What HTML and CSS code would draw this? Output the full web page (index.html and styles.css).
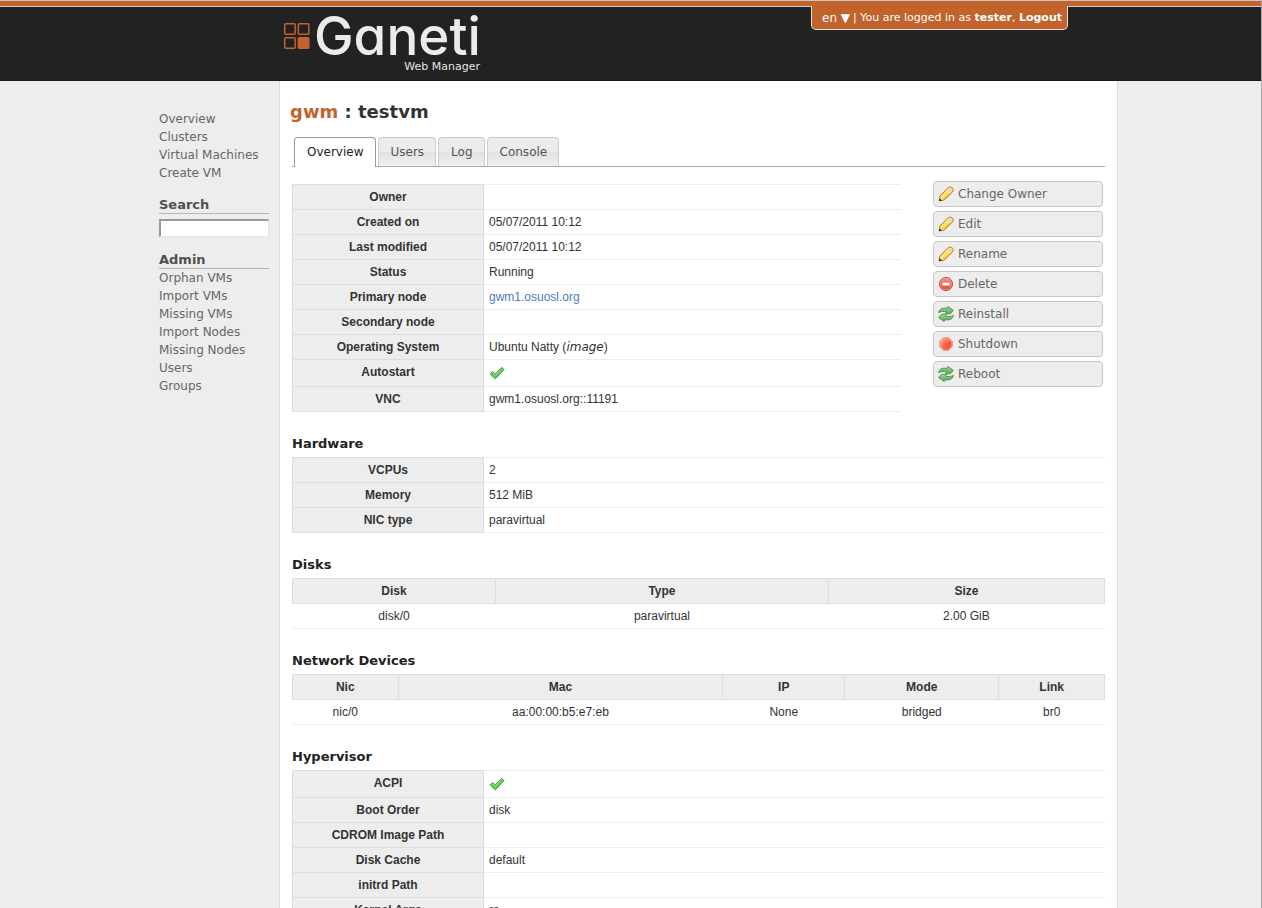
FILE: index.html
```html
<!DOCTYPE html>
<html lang="en">
<head>
<meta charset="utf-8">
<title>gwm : testvm</title>
<link rel="stylesheet" href="styles.css">
</head>
<body>
<svg class="sprite" aria-hidden="true">
  <defs>
    <linearGradient id="g-wood" x1="0" y1="0" x2="1" y2="1"><stop offset="0" stop-color="#fff3a0"/><stop offset=".5" stop-color="#fbdc4c"/><stop offset="1" stop-color="#d99a1c"/></linearGradient>
    <linearGradient id="g-red" x1="0" y1="0" x2="0" y2="1"><stop offset="0" stop-color="#f19a8c"/><stop offset="1" stop-color="#dc4030"/></linearGradient>
    <linearGradient id="g-stop" x1="0" y1="0" x2="1" y2="1"><stop offset="0" stop-color="#ffb090"/><stop offset=".6" stop-color="#ff5a3c"/><stop offset="1" stop-color="#fb4526"/></linearGradient>
    <linearGradient id="g-green" x1="0" y1="0" x2="0" y2="1"><stop offset="0" stop-color="#a5d99c"/><stop offset="1" stop-color="#55a553"/></linearGradient>
    <symbol id="pencil" viewBox="0 0 16 16">
      <path d="M1.200 14.700 2 10 10 1.700Q12.200.2 14.400 1.900 16 3.800 14.500 6L6.200 14Z" fill="url(#g-wood)" stroke="#b5761c"/>
      <path d="M2.500 10.300 6 13.500 1.900 14.300Z" fill="#f6d5a4"/>
      <path d="M.8 15.200 1.500 12.200 4.200 14.700Z" fill="#4d3010"/>
      <path d="M10.400 2.100Q12.500.9 14.100 2.300 15.300 3.900 14 5.700L12.600 7 9 3.500Z" fill="#f8d3ae"/>
      <path d="M8.700 4.200 12 7.400" stroke="#fff0d0"/>
      <path d="M4 11.400 10.200 5.200" stroke="#fff7a8"/>
    </symbol>
    <symbol id="delete" viewBox="0 0 16 16">
      <circle cx="8" cy="8" r="6.500" fill="url(#g-red)" stroke="#c9443b"/>
      <circle cx="8" cy="8" r="5.500" fill="none" stroke="#f4a59b" stroke-width=".7"/>
      <rect x="4.500" y="6.700" width="7" height="2.800" rx=".5" fill="#fff"/>
    </symbol>
    <symbol id="refresh" viewBox="0 0 16 16">
      <g fill="url(#g-green)" stroke="#3d8a3f" stroke-width=".8" stroke-linejoin="round">
        <path d="M.5 6.600C1.600 2.500 5.500 1.400 9.300 2.400L9.800.5 15.400 4.300 12.600 7.600 7.800 8.100 8.500 5.900C6 5.100 3.500 5.300.5 6.600Z"/>
        <path d="M15.500 9.400C14.400 13.500 10.500 14.600 6.700 13.600L6.200 15.500.6 11.700 3.400 8.400 8.200 7.900 7.500 10.100C10 10.900 12.500 10.700 15.500 9.400Z"/>
      </g>
    </symbol>
    <symbol id="stop" viewBox="0 0 16 16">
      <path d="M5.200 1.500h5.600l3.700 3.700v5.600l-3.700 3.700H5.200L1.500 10.800V5.200Z" fill="#fff" stroke="#e5a090"/>
      <path d="M5.600 2.300h4.800l3.300 3.300v4.800l-3.300 3.300H5.600L2.300 10.400V5.600Z" fill="url(#g-stop)" stroke="#f08468" stroke-width=".5"/>
    </symbol>
    <symbol id="tick" viewBox="0 0 16 16">
      <path d="M1.200 9 3.500 6.600 6.300 8.900 12.700 2.400 15 4.600 6.300 13.800Z" fill="#6ccb5f" stroke="#2f9a33" stroke-linejoin="round"/>
      <path d="M2.500 8.800 3.700 7.700 6.300 10 12.800 3.600" fill="none" stroke="#a4e69a" stroke-width=".8"/>
    </symbol>
  </defs>
</svg>

<header class="header">
  <div class="strip"></div>
  <div class="band">
    <div class="wrap band-inner">
      <svg class="logo" viewBox="0 0 204 68" role="img" aria-label="Ganeti Web Manager">
        <g fill="none" stroke="#c1632a" stroke-width="1.500">
          <rect x="1.700" y="16.700" width="10.500" height="10.500" rx="1"/>
          <rect x="15.300" y="16.700" width="10.500" height="10.500" rx="1"/>
          <rect x="1.700" y="30.700" width="10.500" height="10.500" rx="1"/>
          <rect x="15.300" y="30.700" width="10.500" height="10.500" rx="1" fill="#c1632a"/>
        </g>
        <text class="logo-name" x="31" y="48">Ganeti</text>
        <text class="logo-sub" x="197" y="63" text-anchor="end">Web Manager</text>
      </svg>
      <div class="account">
        <button class="lang" type="button">en ▼</button>
        <span>| You are logged in as <a href="#profile">tester</a>, <a href="#logout">Logout</a></span>
      </div>
    </div>
  </div>
</header>

<div class="wrap page">
  <aside class="sidebar">
    <nav class="menu">
      <a href="#overview">Overview</a>
      <a href="#clusters">Clusters</a>
      <a href="#vms">Virtual Machines</a>
      <a href="#create">Create VM</a>
    </nav>
    <form class="search">
      <label class="side-title" for="q">Search</label>
      <input id="q" type="text">
    </form>
    <h3 class="side-title">Admin</h3>
    <nav class="menu">
      <a href="#orphan">Orphan VMs</a>
      <a href="#import-vms">Import VMs</a>
      <a href="#missing-vms">Missing VMs</a>
      <a href="#import-nodes">Import Nodes</a>
      <a href="#missing-nodes">Missing Nodes</a>
      <a href="#users">Users</a>
      <a href="#groups">Groups</a>
    </nav>
  </aside>

  <main class="main">
    <h1 class="title"><a href="#cluster">gwm</a> : testvm</h1>
    <div class="content">
      <nav class="tabs">
        <a class="tab active" href="#tab-overview">Overview</a>
        <a class="tab" href="#tab-users">Users</a>
        <a class="tab" href="#tab-log">Log</a>
        <a class="tab" href="#tab-console">Console</a>
      </nav>

      <div class="summary">
        <table class="props">
          <tr><th>Owner</th><td></td></tr>
          <tr><th>Created on</th><td>05/07/2011 10:12</td></tr>
          <tr><th>Last modified</th><td>05/07/2011 10:12</td></tr>
          <tr><th>Status</th><td>Running</td></tr>
          <tr><th>Primary node</th><td><a href="#node">gwm1.osuosl.org</a></td></tr>
          <tr><th>Secondary node</th><td></td></tr>
          <tr><th>Operating System</th><td>Ubuntu Natty (<em>image</em>)</td></tr>
          <tr><th>Autostart</th><td><svg class="icon" role="img" aria-label="Yes"><use href="#tick"/></svg></td></tr>
          <tr><th>VNC</th><td>gwm1.osuosl.org::11191</td></tr>
        </table>
        <div class="actions">
          <button type="button"><svg class="icon"><use href="#pencil"/></svg>Change Owner</button>
          <button type="button"><svg class="icon"><use href="#pencil"/></svg>Edit</button>
          <button type="button"><svg class="icon"><use href="#pencil"/></svg>Rename</button>
          <button type="button"><svg class="icon"><use href="#delete"/></svg>Delete</button>
          <button type="button"><svg class="icon"><use href="#refresh"/></svg>Reinstall</button>
          <button type="button"><svg class="icon"><use href="#stop"/></svg>Shutdown</button>
          <button type="button"><svg class="icon"><use href="#refresh"/></svg>Reboot</button>
        </div>
      </div>

      <h2>Hardware</h2>
      <table class="props">
        <tr><th>VCPUs</th><td>2</td></tr>
        <tr><th>Memory</th><td>512 MiB</td></tr>
        <tr><th>NIC type</th><td>paravirtual</td></tr>
      </table>

      <h2>Disks</h2>
      <table class="list disks">
        <thead><tr><th>Disk</th><th>Type</th><th>Size</th></tr></thead>
        <tbody><tr><td>disk/0</td><td>paravirtual</td><td>2.00 GiB</td></tr></tbody>
      </table>

      <h2>Network Devices</h2>
      <table class="list nics">
        <thead><tr><th>Nic</th><th>Mac</th><th>IP</th><th>Mode</th><th>Link</th></tr></thead>
        <tbody><tr><td>nic/0</td><td>aa:00:00:b5:e7:eb</td><td>None</td><td>bridged</td><td>br0</td></tr></tbody>
      </table>

      <h2>Hypervisor</h2>
      <table class="props">
        <tr><th>ACPI</th><td><svg class="icon" role="img" aria-label="Yes"><use href="#tick"/></svg></td></tr>
        <tr><th>Boot Order</th><td>disk</td></tr>
        <tr><th>CDROM Image Path</th><td></td></tr>
        <tr><th>Disk Cache</th><td>default</td></tr>
        <tr><th>initrd Path</th><td></td></tr>
        <tr><th>Kernel Args</th><td>ro</td></tr>
      </table>
    </div>
  </main>
</div>
</body>
</html>
```

FILE: styles.css
```css
* {
  box-sizing: border-box;
}

body {
  margin: 0;
  border-right: 1px solid #aaa;
  background: #ededed;
  color: #333;
  font: 12px/18px "DejaVu Sans", sans-serif;
}

a {
  color: inherit;
  text-decoration: none;
}

.sprite {
  position: absolute;
  width: 0;
  height: 0;
}

.wrap {
  max-width: 975px;
  margin: 0 auto;
}

/* Header */
.strip {
  height: 7px;
  border-top: 1px solid #c8c8c8;
  border-bottom: 1px solid #ccc;
  background: #c1632a;
}

.band {
  background: #222;
  border-bottom: 1px solid #1c1a1a;
}

.band-inner {
  display: flex;
  justify-content: space-between;
  align-items: flex-start;
  min-height: 73px;
  padding: 0 50px 0 140px;
}

.logo {
  width: 204px;
  height: 68px;
}

.logo-name {
  fill: #ebebeb;
  font: 500 53px Inter, sans-serif;
  font-feature-settings: "cv11" 1;
}

.logo-sub {
  fill: #e4e4e4;
  font: 11px "DejaVu Sans", sans-serif;
}

.account {
  display: flex;
  align-items: center;
  gap: 3px;
  height: 24px;
  margin-top: -1px;
  padding: 1px 5px 0 10px;
  border: 1px solid #ddd;
  border-top: 0;
  border-radius: 0 0 5px 5px;
  background: #c1632a;
  color: #fff;
  font-size: 11px;
}

.account a {
  font-weight: bold;
}

.lang {
  padding: 0;
  border: 0;
  background: none;
  color: #fff;
  font: 12px/18px "DejaVu Sans", sans-serif;
}

/* Page columns */
.page {
  display: flex;
}

.sidebar {
  flex: 0 0 136px;
  padding: 29px 10px 0 16px;
  color: #666;
}

.menu {
  display: flex;
  flex-direction: column;
}

.side-title {
  display: block;
  margin: 0 0 5px;
  border-bottom: 1px solid #b4b4b4;
  color: #505050;
  font-size: 13px;
  font-weight: bold;
  line-height: 17px;
}

.search {
  margin: 14px 0;
}

.search input {
  display: block;
  width: 100%;
  height: 18px;
  padding: 0 2px;
  border: 1px solid #e6e6e6;
  border-top: 2px solid #999;
  border-left: 2px solid #999;
  background: #fff;
}

h3.side-title {
  margin-bottom: 0;
}

.main {
  flex: 1;
  min-width: 0;
  padding: 20px 10px;
  border: solid #ddd;
  border-width: 0 1px;
  background: #fff;
}

.title {
  margin: 0;
  font-size: 18px;
  line-height: 22px;
}

.title a {
  color: #c1632a;
}

.content {
  padding: 14px 2px 0;
}

/* Tabs */
.tabs {
  display: flex;
  gap: 2px;
  padding: 0 2px;
  border-bottom: 1px solid #aaa;
}

.tab {
  height: 29px;
  padding: 5px 11px 5px 12px;
  border: 1px solid #ccc;
  border-bottom: 0;
  border-radius: 4px 4px 0 0;
  background: linear-gradient(#ececec 50%, #e2e2e2 50%, #efefef);
  color: #555;
}

.tab.active {
  height: 30px;
  margin-bottom: -1px;
  border-color: #999;
  background: #fff;
  color: #222;
}

/* Tables */
.summary {
  display: flex;
  align-items: flex-start;
  gap: 32px;
  padding: 14px 2px 0 0;
}

.summary .props {
  flex: 1;
  margin-top: 3px;
}

table {
  width: 100%;
  border-collapse: collapse;
  font: 12px/14px "Liberation Sans", sans-serif;
}

th,
td {
  height: 25px;
  padding: 5px;
  border: 0 solid #ededed;
  border-width: 1px 0;
  vertical-align: top;
}

th {
  border: 1px solid #ddd;
  background: #ededed;
  text-align: center;
}

.props th {
  width: 191px;
}

.props a {
  color: #4f7ab8;
}

em {
  font-family: "DejaVu Sans", sans-serif;
}

.list td {
  text-align: center;
}

.disks th:nth-child(1) { width: 25%; }
.disks th:nth-child(2) { width: 41%; }

.nics th:nth-child(1) { width: 13%; }
.nics th:nth-child(2) { width: 40%; }
.nics th:nth-child(3) { width: 15%; }
.nics th:nth-child(4) { width: 19%; }

.icon {
  display: block;
  flex: none;
  width: 16px;
  height: 16px;
}

h2 {
  margin: 23px 0 4px;
  color: #222;
  font-size: 13px;
  line-height: 18px;
}

/* Action buttons */
.actions {
  display: flex;
  flex: 0 0 170px;
  flex-direction: column;
  gap: 4px;
}

.actions button {
  display: flex;
  align-items: center;
  gap: 4px;
  height: 26px;
  padding: 0 4px;
  border: 1px solid #c8c8c8;
  border-radius: 4px;
  background: #ededed;
  color: #666;
  font: 12px/18px "DejaVu Sans", sans-serif;
}
```
